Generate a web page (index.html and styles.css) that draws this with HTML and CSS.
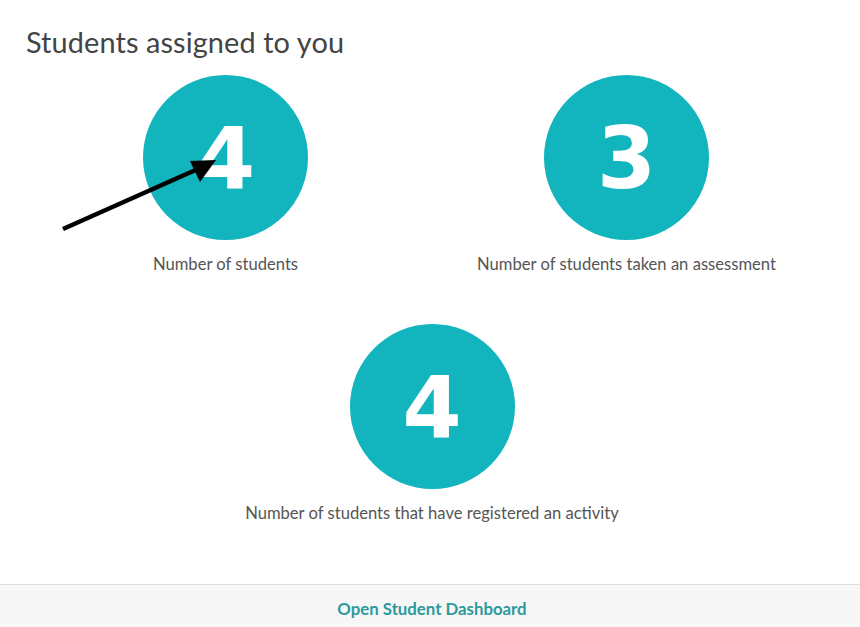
FILE: index.html
```html
<!DOCTYPE html>
<html>
<head>
<meta charset="utf-8">
<link rel="stylesheet" href="styles.css">
</head>
<body>
<div class="page">
  <h1 class="title">Students assigned to you</h1>
  <div class="stats">
    <div class="stat">
      <div class="circle">4</div>
      <div class="label">Number of students</div>
    </div>
    <div class="stat">
      <div class="circle">3</div>
      <div class="label">Number of students taken an assessment</div>
    </div>
    <div class="stat wide">
      <div class="circle">4</div>
      <div class="label">Number of students that have registered an activity</div>
    </div>
  </div>
  <svg class="arrow" width="220" height="240" viewBox="0 0 220 240">
    <line x1="63" y1="229" x2="200" y2="168" stroke="#000" stroke-width="4.5"/>
    <polygon points="216,160 190,161 200,182" fill="#000"/>
  </svg>
  <div class="footer"><a class="footer-link">Open Student Dashboard</a></div>
</div>
</body>
</html>
```
FILE: styles.css
```css
html, body {
  margin: 0;
  padding: 0;
  background: #fff;
}
body {
  font-family: Lato, "Open Sans", sans-serif;
  overflow: hidden;
}
.page {
  position: relative;
  width: 860px;
  height: 627px;
  display: flex;
  flex-direction: column;
}
.title {
  margin: 0;
  padding: 25px 0 0 26px;
  font-size: 28.9px;
  font-weight: 400;
  color: #444;
  line-height: 34px;
  letter-spacing: 0.1px;
}
.stats {
  display: grid;
  grid-template-columns: 401px 401px;
  padding-left: 25px;
  margin-top: 16px;
  row-gap: 50px;
}
.stat {
  display: flex;
  flex-direction: column;
  align-items: center;
}
.stat.wide {
  grid-column: 1 / span 2;
  padding-left: 12px;
}
.circle {
  width: 165px;
  height: 165px;
  border-radius: 50%;
  background: #12b4bd;
  color: #fff;
  font-family: "DejaVu Sans", sans-serif;
  font-weight: 700;
  font-size: 85px;
  display: flex;
  align-items: center;
  justify-content: center;
  line-height: 1;
  padding-top: 2px;
  box-sizing: border-box;
}
.label {
  margin-top: 14px;
  font-size: 16.6px;
  color: #555;
  line-height: 20px;
}
.arrow {
  position: absolute;
  left: 0;
  top: 0;
}
.footer {
  margin-top: auto;
  border-top: 1px solid #ddd;
  background: #f7f7f7;
  display: flex;
  align-items: center;
  justify-content: center;
  padding-left: 4px;
  padding-top: 4px;
  box-sizing: border-box;
  height: 43px;
}
.footer-link {
  font-weight: 700;
  font-size: 16.8px;
  color: #2b9a9c;
}
```
